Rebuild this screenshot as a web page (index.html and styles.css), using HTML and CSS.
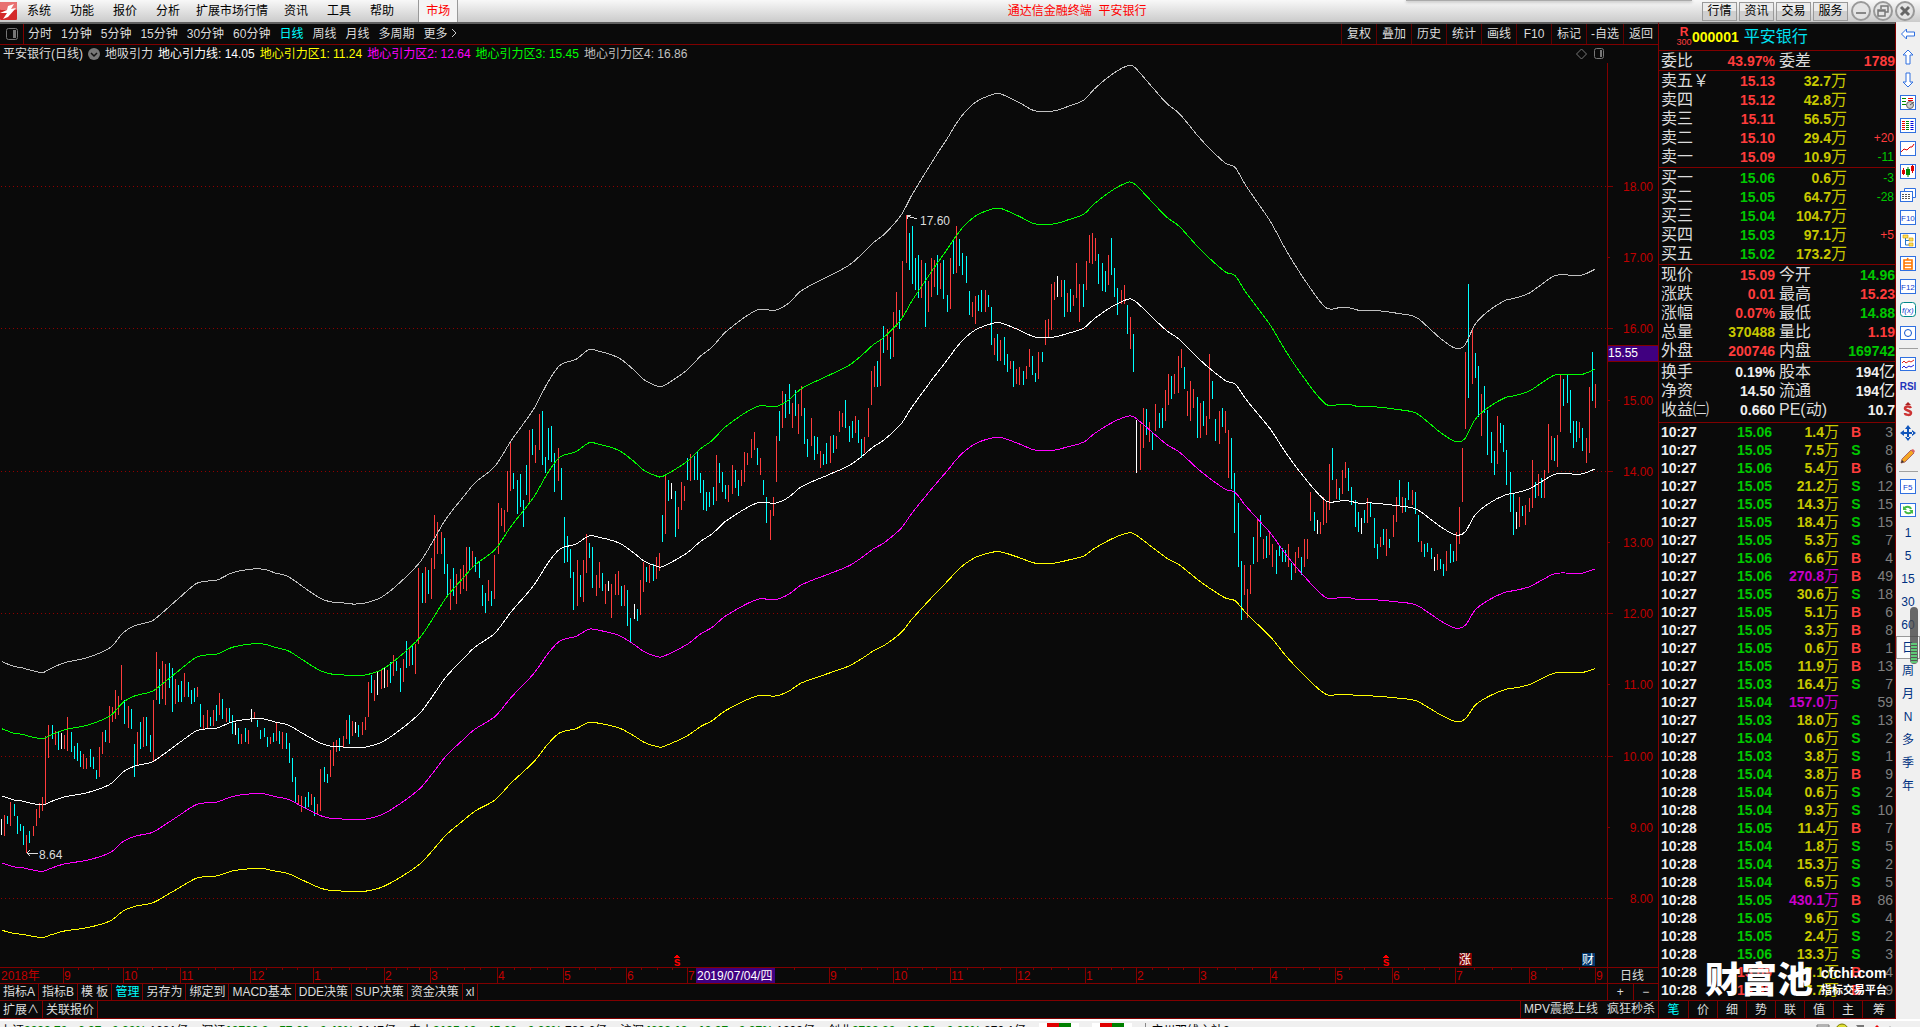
FILE: index.html
```html
<!DOCTYPE html>
<html lang="zh-CN">
<head>
    <meta charset="UTF-8">
    <meta name="viewport" content="width=device-width, initial-scale=1.0">
    <title>通达信金融终端 平安银行</title>
    <link rel="stylesheet" href="styles.css">
</head>
<body>

    <header class="titlebar">
        <svg class="logo" width="17" height="18" viewBox="0 0 17 18"><rect width="17" height="18" rx="1" fill="#d42a2a"/><rect width="17" height="8" rx="1" fill="#e87070"/><path d="M0 11 L7 8 L8 4 L14 2 L11 7 L16 6 L8 15 L3 17 L7 11 Z" fill="#fff"/></svg>
        <nav class="menu">
            <a href="#">系统</a>
            <a href="#">功能</a>
            <a href="#">报价</a>
            <a href="#">分析</a>
            <a href="#" class="wide">扩展市场行情</a>
            <a href="#">资讯</a>
            <a href="#">工具</a>
            <a href="#">帮助</a>
        </nav>
        <a href="#" class="market">市场</a>
        <h1>通达信金融终端&nbsp; 平安银行</h1>
        <div class="top-buttons">
            <button>行情</button>
            <button>资讯</button>
            <button>交易</button>
            <button>服务</button>
        </div>
        <div class="win-buttons">
            <button aria-label="最小化"><svg width="22" height="22" viewBox="0 0 22 22"><circle cx="11" cy="11" r="9" class="ring"/><path d="M6 13h10" stroke="#888" stroke-width="2"/></svg></button>
            <button aria-label="还原"><svg width="22" height="22" viewBox="0 0 22 22"><circle cx="11" cy="11" r="9" class="ring"/><path d="M9 9V6h7v6h-3M6 10h7v6H6zM6 11h7" fill="none" stroke="#777" stroke-width="1.5"/></svg></button>
            <button aria-label="关闭"><svg width="22" height="22" viewBox="0 0 22 22"><circle cx="11" cy="11" r="9" class="ring"/><path d="M7 7l8 8M15 7l-8 8" stroke="#666" stroke-width="3"/></svg></button>
        </div>
        <div class="dock-shadow"></div>
    </header>

    <div class="workspace">
        <main class="chart-pane">
            <div class="toolbar">
                <button class="pane-toggle" aria-label="侧栏"><svg width="14" height="14" viewBox="0 0 14 14"><rect x="1.500" y="1.500" width="11" height="11" rx="2" fill="none" stroke="#777"/><rect x="8" y="3" width="3" height="8" fill="#777"/></svg></button>
                <nav class="periods">
                    <a href="#">分时</a>
                    <a href="#">1分钟</a>
                    <a href="#">5分钟</a>
                    <a href="#">15分钟</a>
                    <a href="#">30分钟</a>
                    <a href="#">60分钟</a>
                    <a href="#" class="on">日线</a>
                    <a href="#">周线</a>
                    <a href="#">月线</a>
                    <a href="#">多周期</a>
                    <a href="#">更多 <svg width="6" height="10" viewBox="0 0 6 10"><path d="M1 1l4 4-4 4" fill="none" stroke="#ccc"/></svg></a>
                </nav>
                <div class="chart-actions">
                    <button>复权</button><button>叠加</button><button>历史</button><button>统计</button><button>画线</button><button>F10</button><button>标记</button><button>-自选</button><button>返回</button>
                </div>
            </div>

            <div class="legend">
                <span>平安银行(日线)</span>
                <svg width="12" height="12" viewBox="0 0 12 12"><circle cx="6" cy="6" r="6" fill="#777"/><path d="M3 5l3 3 3-3" fill="none" stroke="#111" stroke-width="1.500"/></svg>
                <span>地吸引力</span>
                <span class="c-white">地心引力线: 14.05</span>
                <span class="c-yellow">地心引力区1: 11.24</span>
                <span class="c-magenta">地心引力区2: 12.64</span>
                <span class="c-green">地心引力区3: 15.45</span>
                <span class="c-gray">地心引力区4: 16.86</span>
                <svg class="legend-icons" width="28" height="14" viewBox="0 0 28 14"><path d="M5.500 2l5 5-5 5-5-5z" fill="none" stroke="#777"/><rect x="18.500" y="1.500" width="9" height="10" rx="2" fill="none" stroke="#777"/><rect x="24" y="3" width="2" height="7" fill="#777"/></svg>
            </div>

            <svg id="chart" class="chart" viewBox="0 63 1658 921" preserveAspectRatio="none"></svg>

            <div class="tab-row">
                <div class="tabs">
                    <button>指标A</button><button>指标B</button><button>模 板</button><button class="on">管理</button><button>另存为</button><button>绑定到</button><button>MACD基本</button><button>DDE决策</button><button>SUP决策</button><button>资金决策</button><button>xl</button>
                </div>
                <div class="zoom-buttons"><button>+</button><button>−</button></div>
            </div>
            <div class="tab-row last">
                <div class="tabs">
                    <button>扩展∧</button><button>关联报价</button>
                </div>
                <div class="promo"><a href="#">MPV震撼上线</a><a href="#">疯狂秒杀</a></div>
            </div>
        </main>

        <aside class="quote">
            <div class="stock">
                <span class="flags"><b>R</b><span>300</span></span>
                <b class="code">000001</b>
                <span class="stock-name">平安银行</span>
            </div>
            <table class="info"><tbody id="ratio"></tbody></table>
            <table class="book"><tbody id="asks"></tbody></table>
            <table class="book"><tbody id="bids"></tbody></table>
            <table class="info"><tbody id="prices"></tbody></table>
            <table class="info tall"><tbody id="finance"></tbody></table>
            <table class="ticks"><tbody id="ticks"></tbody></table>
            <div class="quote-tabs">
                <button class="on">笔</button><button>价</button><button>细</button><button>势</button><button>联</button><button>值</button><button>主</button><button>筹</button>
            </div>
            <div class="brand">
                <strong>财富池</strong>
                <div><b>cfchi.com</b><span>指标交易平台</span></div>
            </div>
        </aside>

        <nav class="side-tools">
            <button aria-label="后退"><svg width="16" height="16" viewBox="0 0 16 16"><path d="M1.500 8l5-5v3h8v4h-8v3z" class="arrow"/></svg></button>
            <button aria-label="上"><svg width="16" height="16" viewBox="0 0 16 16"><path d="M8 1l5 5h-3v9H6V6H3z" class="arrow"/></svg></button>
            <button aria-label="下"><svg width="16" height="16" viewBox="0 0 16 16"><path d="M8 15l5-5h-3V1H6v9H3z" class="arrow"/></svg></button>
            <button aria-label="报价"><svg width="16" height="16" viewBox="0 0 16 16"><rect x=".5" y=".5" width="15" height="14" class="box"/><path d="M2 3.500h4M2 6.500h4M2 9.500h4" stroke="#080"/><path d="M8 3.500h5M8 5.500h5" stroke="#e00"/><circle cx="10" cy="10" r="3.500" fill="#ccc" stroke="#666"/><path d="M10 10l4-3" stroke="#555"/></svg></button>
            <button aria-label="列表"><svg width="16" height="16" viewBox="0 0 16 16"><rect x=".5" y=".5" width="15" height="14" class="box"/><g stroke-dasharray="1 1"><path d="M3.500 3v9" stroke="#e00" stroke-width="3"/><path d="M7.500 3v9" stroke="#080" stroke-width="3"/><path d="M12 3v9" stroke="#00d" stroke-width="3"/></g></svg></button>
            <button aria-label="分时"><svg width="16" height="16" viewBox="0 0 16 16"><rect x=".5" y=".5" width="15" height="14" class="box"/><path d="M1 11l3-3 3 1 3-3h2l2-3" fill="none" stroke="#d00"/></svg></button>
            <button aria-label="K线"><svg width="16" height="16" viewBox="0 0 16 16"><rect x=".5" y=".5" width="15" height="14" class="box"/><path d="M2 6h3v4H2zM3 4h1v7H3zM11 2h3v5h-3zM12 1h1v8h-1z" fill="#d00"/><path d="M6 5h4v6H6zM7.500 3h1v10h-1z" fill="#080"/></svg></button>
            <button aria-label="资料"><svg width="16" height="16" viewBox="0 0 16 16"><path d="M4.500 4V1.500h11v9H13" class="box"/><rect x=".5" y="4.500" width="12" height="10" class="box"/><path d="M2 7.500h9M2 9.500h9M2 11.500h9" stroke="#555" stroke-dasharray="2 1"/></svg></button>
            <button aria-label="F10"><svg width="16" height="16" viewBox="0 0 16 16"><rect x=".5" y=".5" width="15" height="14" class="box"/><text x="1" y="11">F10</text></svg></button>
            <button aria-label="树"><svg width="16" height="16" viewBox="0 0 16 16"><rect x=".5" y=".5" width="15" height="14" class="box"/><path d="M5.500 5v7H9M5.500 7.500H9" fill="none" stroke="#27c"/><path d="M3 2h5v3H3zM9 5h4v3H9zM9 10h4v3H9z" fill="#fd5" stroke="#c90" stroke-width=".6"/></svg></button>
            <button aria-label="自选"><svg width="16" height="16" viewBox="0 0 16 16"><rect x=".5" y=".5" width="15" height="14" class="box"/><path d="M4 4h8v9H4zM4 7h8M4 10h8M7 4l1-2" fill="none" stroke="#f70" stroke-width="1.600"/></svg></button>
            <button aria-label="F12"><svg width="16" height="16" viewBox="0 0 16 16"><rect x=".5" y=".5" width="15" height="14" class="box"/><text x="1" y="11">F12</text></svg></button>
            <button aria-label="公式"><svg width="16" height="16" viewBox="0 0 16 16"><rect x=".5" y=".5" width="15" height="14" rx="3" fill="#fff" stroke="#088"/><text x="2" y="11" font-style="italic">f(x)</text></svg></button>
            <button aria-label="圆"><svg width="16" height="16" viewBox="0 0 16 16"><rect x=".5" y="1.500" width="15" height="13" class="box"/><circle cx="8" cy="8" r="3.500" fill="none" stroke="#15c"/></svg></button>
            <hr>
            <button aria-label="指标"><svg width="16" height="16" viewBox="0 0 16 16"><rect x=".5" y="1.500" width="15" height="13" class="box"/><path d="M2 7l2-2 2 2 3-2 2 1 3-2" fill="none" stroke="#d22"/><path d="M2 12l2-2 2 2 3-2 2 1 3-2" fill="none" stroke="#22d"/></svg></button>
            <button class="rsi">RSI</button>
            <button aria-label="资金"><svg width="16" height="16" viewBox="0 0 16 16"><path d="M11 6c-1-2-6-2-6 .5S11 8 11 11s-6 2-6 0" fill="none" stroke="#c33" stroke-width="2.500"/><path d="M8 0l3 3H5z" fill="#a22"/></svg></button>
            <button aria-label="移动"><svg width="16" height="16" viewBox="0 0 16 16"><path d="M8 0l3 4H5zM8 16l3-4H5zM0 8l4-3v6zM16 8l-4-3v6zM7 3h2v10H7zM3 7h10v2H3z" fill="#15b"/></svg></button>
            <button aria-label="画线"><svg width="16" height="16" viewBox="0 0 16 16"><path d="M2 11L11 2l3 3-9 9-4 1z" fill="#f5a623" stroke="#a66"/><path d="M11 2l3 3 1-2-2-2z" fill="#d66"/><path d="M1 15l1-3 2 2z" fill="#333"/></svg></button>
            <hr>
            <button aria-label="F5"><svg width="16" height="16" viewBox="0 0 16 16"><rect x=".5" y=".5" width="15" height="14" class="box"/><text x="3" y="11">F5</text></svg></button>
            <button aria-label="刷新"><svg width="16" height="16" viewBox="0 0 16 16"><rect x=".5" y="1.500" width="15" height="13" class="box"/><path d="M4 7c1-3 6-3 7 0M12 9c-1 3-6 3-7 0" fill="none" stroke="#4b4" stroke-width="2"/><path d="M3 4v4h4zM13 12V8H9z" fill="#4b4"/></svg></button>
            <button>1</button>
            <button>5</button>
            <button>15</button>
            <button>30</button>
            <button>60</button>
            <button class="on">日</button>
            <button>周</button>
            <button>月</button>
            <button>N</button>
            <button>多</button>
            <button>季</button>
            <button>年</button>
            <div class="level"></div>
        </nav>
    </div>

    <footer class="status">
        <span>上证<i>3338.70 &nbsp;-6.97 &nbsp;-0.20%</i> 1681亿</span>
        <span>深证<i>13783.2 &nbsp;-57.68 &nbsp;-0.42%</i> 2147亿</span>
        <span>中小<i>9195.19 &nbsp;-45.63 &nbsp;-0.38%</i> 782.6亿</span>
        <span>沪深<i>4693.18 &nbsp;-13.27 &nbsp;-0.27%</i> 1209亿</span>
        <span>创业<i>2738.20 &nbsp;-10.59 &nbsp;-0.38%</i> 872.1亿</span>
        <div class="meter"><b></b><b></b></div>
        <div class="meter"><b></b><b></b></div>
        <span class="host">广州双线主站2</span>
        <svg class="status-icons" width="80" height="8" viewBox="0 0 80 8"><path d="M1 8V4h12v4M1 6h12" fill="none" stroke="#777"/><circle cx="26" cy="9" r="6" fill="#dd3" stroke="#770"/><path d="M40 4h8v4h-5z" fill="#777"/><path d="M57 8l4-4 4 4z" fill="#e00"/><path d="M72 8l2-3 2 3z" fill="#888"/></svg>
    </footer>

    <script src="script.js"></script>
</body>
</html>
```

FILE: styles.css
```css
* {
    box-sizing: border-box;
}

body {
    margin: 0;
    height: 100vh;
    display: flex;
    flex-direction: column;
    overflow: hidden;
    background: #0a0a0a;
    color: #dcdcdc;
    font-family: "Liberation Sans", "Noto Sans CJK SC", sans-serif;
    font-size: 12px;
    line-height: 16px;
    white-space: nowrap;
}

a {
    color: inherit;
    text-decoration: none;
}

button {
    margin: 0;
    padding: 0;
    border: none;
    background: none;
    color: inherit;
    font: inherit;
    cursor: pointer;
}

/* title bar */
.titlebar {
    position: relative;
    display: flex;
    align-items: center;
    height: 22px;
    background: linear-gradient(#f8f8f8, #cbcbcb);
    color: #000;
}

.logo {
    margin-right: 10px;
}

.menu {
    display: flex;
    gap: 19px;
}

.menu .wide {
    margin: 0 -3px;
}

.market {
    align-self: stretch;
    display: flex;
    align-items: center;
    margin-left: 24px;
    padding: 0 7px;
    border-left: 1px solid #999;
    border-right: 1px solid #999;
    background: #f4f4f4;
    color: #f00;
}

.titlebar h1 {
    margin: 0 auto;
    padding-right: 6px;
    color: #f00;
    font-size: 12px;
    font-weight: normal;
}

.top-buttons {
    display: flex;
    gap: 2px;
}

.top-buttons button {
    width: 35px;
    height: 19px;
    border: 1px solid #999;
    background: linear-gradient(#ececec 50%, #cfcfcf 50%);
}

.win-buttons {
    display: flex;
    padding: 0 4px 0 2px;
}

.win-buttons button,
.win-buttons svg {
    display: block;
}

.ring {
    fill: #e4e4e4;
    stroke: #999;
    stroke-width: 2;
}

.dock-shadow {
    position: absolute;
    top: 0;
    right: 228px;
    width: 286px;
    height: 1px;
    background: #aaa;
    box-shadow: 0 1px 3px #888;
}

/* layout */
.workspace {
    flex: 1;
    display: flex;
    min-height: 0;
}

.chart-pane {
    flex: 1;
    min-width: 0;
    display: flex;
    flex-direction: column;
    border-top: 2px solid #606060;
}

/* period toolbar */
.toolbar {
    display: flex;
    height: 21px;
    border-bottom: 1px solid #800000;
}

.pane-toggle {
    width: 24px;
    border-right: 1px solid #800000;
}

.pane-toggle svg {
    display: block;
    margin: auto;
}

.periods {
    display: flex;
    align-items: center;
    gap: 9px;
    margin-left: 4px;
}

.on {
    color: #00ffff;
}

.chart-actions {
    display: flex;
    margin-left: auto;
}

.chart-actions button {
    min-width: 35px;
    padding: 0 4px;
    border-left: 1px solid #600000;
}

/* indicator legend */
.legend {
    display: flex;
    align-items: center;
    gap: 5px;
    height: 18px;
    padding-left: 3px;
}

.legend-icons {
    margin-left: auto;
    margin-right: 54px;
}

.c-white { color: #fff; }
.c-yellow { color: #ffff00; }
.c-magenta { color: #ff00ff; }
.c-green { color: #00ff00; }
.c-gray { color: #c0c0c0; }

/* chart */
.chart {
    display: block;
    flex: 1;
    width: 100%;
    min-height: 0;
}

.chart path,
.chart rect {
    shape-rendering: crispEdges;
}

.curve {
    fill: none;
}

.frame {
    stroke: #800000;
}

.grid {
    stroke: #900000;
    stroke-dasharray: 1 3;
}

.axis-text {
    fill: #c00000;
}

.mark-text {
    fill: #dcdcdc;
}

.arrow-line {
    fill: none;
    stroke: #dcdcdc;
}

.cursor-box {
    fill: #400080;
}

/* bottom tabs */
.tab-row {
    display: flex;
    justify-content: space-between;
    height: 17px;
    border-bottom: 1px solid #800000;
}

.tab-row.last {
    height: 18px;
}

.tabs,
.zoom-buttons,
.promo {
    display: flex;
}

.tabs button {
    padding: 0 3px;
    border-right: 1px solid #800000;
}

.zoom-buttons {
    width: 51px;
    border-left: 1px solid #800000;
}

.zoom-buttons button {
    flex: 1;
}

.zoom-buttons button + button {
    border-left: 1px solid #800000;
}

.promo {
    gap: 9px;
    padding: 0 3px;
    border-left: 1px solid #800000;
}

/* quote panel */
.quote {
    position: relative;
    width: 238px;
    display: flex;
    flex-direction: column;
    border-top: 2px solid #606060;
    border-left: 1px solid #800000;
    border-right: 1px solid #800000;
}

.stock {
    display: flex;
    align-items: center;
    height: 27px;
    padding-left: 17px;
    border-bottom: 1px solid #800000;
    font-size: 16px;
}

.flags {
    display: flex;
    flex-direction: column;
    align-items: center;
    width: 16px;
    color: #ff3c3c;
    font-size: 9px;
    line-height: 10px;
}

.flags b {
    font-size: 12px;
}

.code {
    color: #ffff00;
    font-size: 14px;
}

.stock-name {
    margin-left: 5px;
    color: #00e0f0;
}

.quote table {
    width: 100%;
    table-layout: fixed;
    border-collapse: separate;
    border-spacing: 0;
    border-bottom: 1px solid #800000;
    padding: 0 0 1px 2px;
    font-size: 14px;
}

.quote td,
.quote th {
    height: 19px;
    padding: 0;
    overflow: visible;
    line-height: 18px;
    font-weight: bold;
    text-align: right;
}

.quote th {
    color: #dcdcdc;
    font-size: 16px;
    font-weight: normal;
    text-align: left;
}

.quote td span {
    font-size: 16px;
    font-weight: normal;
}

.quote .info td + th {
    padding-left: 4px;
}

.quote table:nth-of-type(1) {
    padding-bottom: 0;
}

.quote .tall {
    padding-bottom: 3px;
}

.quote .delta {
    padding-right: 1px;
    font-size: 12px;
    font-weight: normal;
}

.quote .ticks td {
    height: 18px;
}

.quote .ticks td span {
    font-size: 15px;
}

.quote .ticks .time {
    color: #f0f0f0;
    text-align: left;
}

.quote .ticks .side {
    text-align: center;
}

.quote .ticks .count {
    padding-right: 2px;
    color: #808080;
    font-weight: normal;
}

.up { color: #ff3c3c; }
.down { color: #00c800; }
.vol { color: #c8c800; }
.big { color: #c800c8; }
.flat { color: #f0f0f0; }

.quote-tabs {
    display: flex;
    height: 18px;
    border-bottom: 1px solid #800000;
}

.quote-tabs button {
    width: 29px;
}

.quote-tabs button:last-child {
    flex: 1;
}

.quote-tabs button + button {
    border-left: 1px solid #800000;
}

.brand {
    position: absolute;
    right: 8px;
    bottom: 18px;
    display: flex;
    align-items: center;
    gap: 8px;
    color: #fff;
}

.brand strong {
    font-size: 36px;
    font-weight: 900;
    line-height: 40px;
}

.brand div {
    display: flex;
    flex-direction: column;
}

.brand b {
    font-size: 14px;
    line-height: 18px;
}

.brand span {
    font-size: 11px;
    font-weight: bold;
}

/* right tool strip */
.side-tools {
    position: relative;
    width: 24px;
    display: flex;
    flex-direction: column;
    background: #f0f0f0;
    color: #003080;
}

.side-tools button {
    display: flex;
    align-items: center;
    justify-content: center;
    height: 23px;
}

.side-tools hr {
    width: 19px;
    height: 8px;
    margin: 0 auto;
    border: none;
    background: linear-gradient(#a0a0a0, #a0a0a0) center / 100% 1px no-repeat;
}

.side-tools .on {
    border: 1px solid #999;
    background: #fafafa;
    color: #003080;
}

.side-tools .rsi {
    color: #2233bb;
    font-size: 10px;
    font-weight: bold;
}

.side-tools text {
    fill: #1040d0;
    font-size: 8px;
}

.arrow {
    fill: #fff;
    stroke: #3070e0;
}

.box {
    fill: #fff;
    stroke: #3070e0;
}

.level {
    position: absolute;
    top: 585px;
    right: 2px;
    width: 8px;
    height: 57px;
    border-radius: 4px;
    background: repeating-linear-gradient(#5fc878 0 2px, #555 2px 3px) center bottom 1px / 6px 20px no-repeat, rgba(70, 70, 70, 0.8);
}

/* status bar, mostly below the window edge */
.status {
    display: flex;
    height: 8px;
    padding-top: 2px;
    gap: 13px;
    border-top: 2px solid #fff;
    background: #f0f0f0;
    color: #000;
    overflow: hidden;
}

.status i {
    color: #008000;
    font-style: normal;
    font-weight: bold;
}

.meter {
    display: flex;
    width: 40px;
    height: 20px;
    justify-content: center;
    background: #fff;
}

.meter b {
    width: 12px;
    background: #e00000;
}

.meter b + b {
    background: #008000;
}

.host {
    padding-left: 5px;
    border-left: 1px solid #888;
}

.status-icons {
    flex: none;
    margin: -2px 24px 0 auto;
}
```

FILE: script.js
```js
// one bar per trading day: colour, high, low (chart units, y down)
const bars = `
w819,835 r815,836 c816,824 r802,826 c804,816 c816,834 c824,831 c826,845 r835,853 c831,843 r826,836 r809,826 r803,818 r797,811 r736,805
r725,758 c725,739 r731,745 c732,750 w733,749 r735,749 r717,751 c732,752 c746,759 c743,761 c751,767 r754,769 r758,769 c749,767 c757,769
c770,779 r747,777 r732,754 c730,742 r706,743 r707,722 r690,719 r696,715 r665,700 c700,724 r706,728 c709,729 c744,777 r732,765 c722,749
r717,747 c717,746 c735,752 r700,761 r652,700 c669,704 r661,699 r664,705 c663,688 c668,712 r679,704 c685,702 c681,702 r673,697 c682,697
c690,704 c688,702 r687,697 c704,727 r715,729 r710,728 c717,726 r710,726 c705,721 r693,715 c699,719 r708,722 c708,722 c715,734 w723,735
c728,744 r734,744 c728,742 r730,744 w709,722 r712,718 c720,727 c730,739 c728,737 c737,747 r737,744 c733,742 r723,741 c731,744 r732,749
c733,749 c743,763 c758,782 c777,803 r795,804 r796,812 c797,808 c792,807 r794,805 c797,816 r804,815 r769,811 c767,782 c774,783 r750,777
r742,766 r740,752 c738,751 r736,748 r720,739 c715,744 r721,736 w722,733 c725,737 r722,735 r717,730 r682,717 c675,693 r680,701 w672,695
r670,689 w667,688 r670,687 c662,683 r655,676 c661,671 c668,692 r659,682 c641,668 r648,666 c646,665 r644,674 r568,644 c573,603 r567,603
c570,594 r558,599 r515,569 r522,554 r532,554 c538,574 c564,596 r579,610 c568,596 r574,604 r569,594 r565,589 r547,591 c547,570 r551,568
c557,572 c561,578 c585,606 c593,613 r580,601 c591,606 r555,599 r503,554 r508,526 r510,532 r471,512 r441,491 c473,489 c480,514 c474,507
c500,527 c465,495 r430,502 c429,455 r445,463 r414,450 c411,465 c457,473 c428,460 c426,462 c453,492 r448,481 c468,500 c517,563 c536,562
c549,578 c572,610 r560,606 c575,597 r560,602 r534,573 c543,558 c547,588 r575,596 r562,588 c573,591 r584,604 w581,591 r584,618 r574,595
r571,595 c586,606 r585,606 c590,626 c618,642 w604,619 c609,621 r580,615 r562,592 c567,582 r565,583 c564,581 r557,579 r553,571 c515,542
r475,534 c480,501 w483,499 c491,537 r507,529 r482,510 r486,501 c458,480 r454,481 c456,480 c452,480 c473,493 c480,510 c492,511 c492,507
c487,505 r455,501 c463,483 c472,492 c485,499 r485,502 r465,494 c470,488 c480,496 r470,486 r452,482 r453,465 r439,458 r432,450 c448,465
r458,475 c480,495 c497,523 r510,540 r497,516 r436,482 c411,441 r391,428 c394,418 c384,414 r403,428 c390,416 r404,434 r386,416 c408,444
c439,457 r418,446 c436,460 c437,454 r451,468 c454,465 c443,464 r436,463 c435,453 r436,449 r411,432 r413,427 c400,428 c426,442 c421,438
r416,433 c420,443 c439,458 r437,453 r408,437 r371,405 r366,387 c361,387 r339,386 c326,353 r329,350 c337,359 r312,357 r292,327 c310,329
r261,316 r215,263 c233,270 c226,284 c258,290 c255,298 r260,298 c263,327 r281,312 r258,297 r260,287 c255,295 r263,289 c260,299 c295,312
r258,309 c240,274 r226,273 c239,266 c253,275 c256,283 c291,315 r302,317 r296,324 c295,311 c290,312 r290,312 c295,307 c307,345 r338,355
c334,361 r340,361 c337,365 c354,372 r361,369 c361,387 r369,384 r367,385 c371,385 r366,379 r349,367 c356,375 c373,382 r352,379 c352,362
r320,345 r319,337 r284,330 r282,300 w276,297 r280,297 c280,317 r293,312 c289,312 r295,306 r263,298 r284,322 c284,307 r261,290 r235,263
r233,264 r238,261 c254,284 c263,291 c271,292 r255,285 c238,275 c268,297 c288,315 r290,304 r285,304 c305,334 r317,349 c334,372 w420,473
r424,470 r408,448 c409,435 r422,442 c433,450 r404,431 c413,428 c408,428 r390,421 r374,405 c376,399 r374,394 r356,393 r349,368 c367,389
r391,416 r381,421 r389,408 c397,438 r403,438 c401,426 r416,435 r354,419 c381,399 c419,441 r411,444 c408,427 r411,433 r430,478 c438,489
c473,533 c503,567 c561,620 r565,595 r589,618 r565,594 c537,564 r518,562 c515,537 r539,559 c536,558 r533,555 r544,567 c550,574 c546,556
c548,562 c550,562 r544,567 c563,580 r552,573 r547,558 c557,575 r539,567 r539,559 r492,521 c512,531 w520,534 r522,534 r497,525 r501,523
r464,510 c448,480 r479,499 c488,500 r470,494 r462,478 c468,491 c487,505 c500,527 c512,532 w518,534 c510,523 r498,523 c502,517 c518,548
c544,559 r537,547 c529,545 r529,556 c539,548 r515,537 r497,522 c480,506 r497,513 c498,512 c482,500 r490,505 c492,514 c515,542 r541,552
c544,557 c543,552 c548,559 w557,571 r554,570 c559,569 c564,576 r551,571 c544,563 c551,562 r532,561 r507,544 r448,502 r352,429 c284,398
r329,384 c353,378 c366,417 r394,436 c386,413 c410,455 c432,463 c451,475 r416,464 c423,443 c425,452 c450,485 c472,512 c494,535 w512,529
r497,527 c506,516 r505,525 r498,512 r460,508 c482,498 r474,496 c478,498 r470,498 r424,473 r436,460 c438,461 r435,467 r374,432 c379,406
c375,403 c390,433 c421,448 c421,442 r422,438 c428,451 r438,463 r387,453 c352,401 r384,408`.trim().split(/\s+/);

// gravity line, the four zones are fixed ratios of it
const gravity = `
2,796 14,800 22,801 30,803 43,805 50,802 64,797 86,793 102,788 112,783 123,772 135,766 152,762 164,754 179,743 196,731 205,729 217,728
232,722 250,719 264,719 275,722 288,725 302,733 320,743 330,746 343,747 354,748 366,747 382,742 400,730 420,713 432,697 446,677 464,658
475,647 495,633 511,612 534,585 548,563 560,549 576,544 589,536 598,537 619,543 634,553 644,561 659,567 664,566 687,553 701,541 712,534
726,521 757,503 776,503 789,497 801,487 828,475 850,465 866,453 873,447 884,440 901,424 912,407 934,377 948,359 956,348 965,338 977,329
994,323 1001,323 1019,330 1035,337 1054,337 1069,333 1084,328 1094,319 1113,306 1129,299 1135,301 1151,316 1167,331 1179,339 1197,357
1208,367 1226,381 1235,384 1245,398 1258,414 1271,430 1286,453 1304,477 1326,501 1340,501 1349,501 1358,503 1372,503 1400,506 1416,509
1429,518 1441,527 1456,535 1465,532 1475,515 1488,504 1505,495 1515,493 1529,489 1541,482 1556,474 1581,474 1595,469`
    .trim().split(/\s+/).map(p => p.split(',').map(Number));

const priceToY = p => 186 + (18 - p) * 71.2;
const yToPrice = y => 18 - (y - 186) / 71.2;
const colors = { r: '#ff3c3c', c: '#00ffff', w: '#ffffff' };

// smooth curve through all the points
function curve(pts) {
    let d = `M${pts[0]}`;
    for (let i = 0; i < pts.length - 1; i++) {
        const a = pts[i - 1] || pts[i], b = pts[i], c = pts[i + 1], e = pts[i + 2] || c;
        const w = (c[0] - b[0]) / 3;
        const s1 = (c[1] - a[1]) / (c[0] - a[0]);
        const s2 = (e[1] - b[1]) / (e[0] - b[0]);
        d += `C${[b[0] + w, b[1] + s1 * w, c[0] - w, c[1] - s2 * w, c[0], c[1]].map(v => v.toFixed(1)).join(' ')}`;
    }
    return d;
}

function drawChart() {
    let s = '';

    for (let p = 8; p <= 18; p++) {
        const y = Math.round(priceToY(p));
        if (p % 2 === 0) s += `<path class="grid" d="M1 ${y}.5H1607"/>`;
        s += `<path class="frame" d="M1607 ${y}.5h${p % 2 ? 3 : 6}"/>`;
        s += `<text class="axis-text" x="1653" y="${y + 5}" text-anchor="end">${p}.00</text>`;
    }

    const step = 1594 / (bars.length - 1);
    bars.forEach((bar, i) => {
        const [top, bottom] = bar.slice(1).split(',').map(Number);
        s += `<rect x="${Math.round(1 + i * step)}" y="${top}" width="1" height="${bottom - top}" fill="${colors[bar[0]]}"/>`;
    });

    [[0.8, '#ffff00'], [0.9, '#ff00ff'], [1, '#ffffff'], [1.1, '#00ff00'], [1.2, '#c0c0c0']].forEach(([k, color]) => {
        const pts = gravity.map(([x, y]) => [x, priceToY(yToPrice(y) * k)]);
        s += `<path class="curve" d="${curve(pts)}" stroke="${color}"/>`;
    });

    // highest and lowest price
    s += '<path class="arrow-line" d="M917 219l-10-3M911 215h-4v4"/><text class="mark-text" x="920" y="225">17.60</text>';
    s += '<path class="arrow-line" d="M38 853.500H27M30 850l-3 3 3 3"/><text class="mark-text" x="39" y="859">8.64</text>';

    // frame and time axis
    s += '<path class="frame" d="M1607.500 45V984M0 967.500H1658M0 983.500H1658"/>';
    s += '<text class="axis-text" x="1" y="980">2018年</text>';
    const months = [[63, 9], [123, 10], [180, 11], [250, 12], [313, 1], [384, 2], [430, 3], [497, 4], [563, 5], [626, 6], [687, 7],
        [829, 9], [893, 10], [950, 11], [1016, 12], [1085, 1], [1136, 2], [1199, 3], [1270, 4], [1335, 5], [1392, 6], [1455, 7], [1529, 8], [1595, 9]];
    months.forEach(([x, m], i) => {
        s += `<path class="frame" d="M${x}.5 968V983"/>`;
        s += `<text class="axis-text" x="${x + 1}" y="980">${m}</text>`;
        if (i < months.length - 1) {
            const w = (months[i + 1][0] - x) / 4;
            for (let n = 1; n < 4; n++) s += `<path class="frame" d="M${Math.round(x + n * w)}.5 968v2"/>`;
        }
    });
    s += '<rect class="cursor-box" x="696" y="968" width="79" height="15"/><text fill="#fff" x="697" y="980">2019/07/04/四</text>';
    s += '<rect class="cursor-box" x="1608" y="345" width="50" height="16"/><path class="frame" d="M1608 345.500h50M1608 361.500h50"/><text fill="#fff" x="1608" y="357">15.55</text>';
    s += '<text class="mark-text" x="1620" y="980">日线</text>';

    // event marks
    [677, 1386].forEach(x => {
        s += `<path d="M${x} 954l3 4h-6z" fill="#f00"/><text x="${x}" y="966" text-anchor="middle" font-weight="bold" fill="#f00">s</text>`;
    });
    s += '<rect x="1459" y="953" width="13" height="13" fill="#800000"/><text x="1459" y="964" fill="#fff">涨</text>';
    s += '<rect x="1582" y="953" width="13" height="13" fill="#003870"/><text x="1582" y="964" fill="#fff">财</text>';

    document.getElementById('chart').innerHTML = s;
}

const unit = v => v.replace(/[万亿]/, '<span>$&</span>');

function cols(widths) {
    return '<tr>' + widths.map(w => `<td style="width:${w}px;height:0"></td>`).join('') + '</tr>';
}

function fillInfo(id, rows) {
    document.getElementById(id).innerHTML = cols([50, 64, 50, 70]) + rows.map(r =>
        `<tr><th>${r[0]}</th><td class="${r[2]}">${unit(r[1])}</td><th>${r[3]}</th><td class="${r[5]}">${unit(r[4])}</td></tr>`).join('');
}

function fillBook(id, cls, rows) {
    document.getElementById(id).innerHTML = cols([50, 64, 72, 48]) + rows.map(r =>
        `<tr><th>${r[0]}</th><td class="${cls}">${r[1]}</td><td class="vol">${unit(r[2] + '万')}</td><td class="delta ${r[3] > 0 ? 'up' : 'down'}">${r[3] || ''}</td></tr>`).join('');
}

fillInfo('ratio', [['委比', '43.97%', 'up', '委差', '1789', 'up']]);
fillBook('asks', 'up', [
    ['卖五￥', '15.13', '32.7'],
    ['卖四', '15.12', '42.8'],
    ['卖三', '15.11', '56.5'],
    ['卖二', '15.10', '29.4', '+20'],
    ['卖一', '15.09', '10.9', '-11']
]);
fillBook('bids', 'down', [
    ['买一', '15.06', '0.6', '-3'],
    ['买二', '15.05', '64.7', '-28'],
    ['买三', '15.04', '104.7'],
    ['买四', '15.03', '97.1', '+5'],
    ['买五', '15.02', '173.2']
]);
fillInfo('prices', [
    ['现价', '15.09', 'up', '今开', '14.96', 'down'],
    ['涨跌', '0.01', 'up', '最高', '15.23', 'up'],
    ['涨幅', '0.07%', 'up', '最低', '14.88', 'down'],
    ['总量', '370488', 'vol', '量比', '1.19', 'up'],
    ['外盘', '200746', 'up', '内盘', '169742', 'down']
]);
fillInfo('finance', [
    ['换手', '0.19%', 'flat', '股本', '194亿', 'flat'],
    ['净资', '14.50', 'flat', '流通', '194亿', 'flat'],
    ['收益㈡', '0.660', 'flat', 'PE(动)', '10.7', 'flat']
]);

const ticks = `
27 15.06 1.4 B 3|27 15.05 7.5 S 8|27 15.06 5.4 B 6|27 15.05 21.2 S 12|27 15.05 14.3 S 15|27 15.05 18.4 S 15|27 15.05 5.3 S 7|27 15.06 6.6 B 4
27 15.06 270.8 B 49|27 15.05 30.6 S 18|27 15.05 5.1 B 6|27 15.05 3.3 B 8|27 15.05 0.6 B 1|27 15.05 11.9 B 13|27 15.03 16.4 S 7|27 15.04 157.0 - 59
27 15.03 18.0 S 13|27 15.04 0.6 S 2|28 15.03 3.8 S 1|28 15.04 3.8 B 9|28 15.04 0.6 S 2|28 15.04 9.3 S 10|28 15.05 11.4 B 7|28 15.04 1.8 S 5
28 15.04 15.3 S 2|28 15.04 6.5 S 5|28 15.05 430.1 B 86|28 15.05 9.6 S 4|28 15.05 2.4 S 2|28 15.06 13.3 S 3|28 15.09 7.1 B 4|28 15.09 7.7 B 9`;

document.getElementById('ticks').innerHTML = cols([46, 65, 67, 34, 22]) + ticks.trim().split(/[|\n]/).map(line => {
    const [min, price, vol, side, count] = line.split(' ');
    return `<tr><td class="time">10:${min}</td><td class="${price > 15.08 ? 'up' : 'down'}">${price}</td>` +
        `<td class="${vol > 100 ? 'big' : 'vol'}">${unit(vol + '万')}</td>` +
        `<td class="side ${side === 'B' ? 'up' : 'down'}">${side === '-' ? '' : side}</td><td class="count">${count}</td></tr>`;
}).join('');

drawChart();
```
